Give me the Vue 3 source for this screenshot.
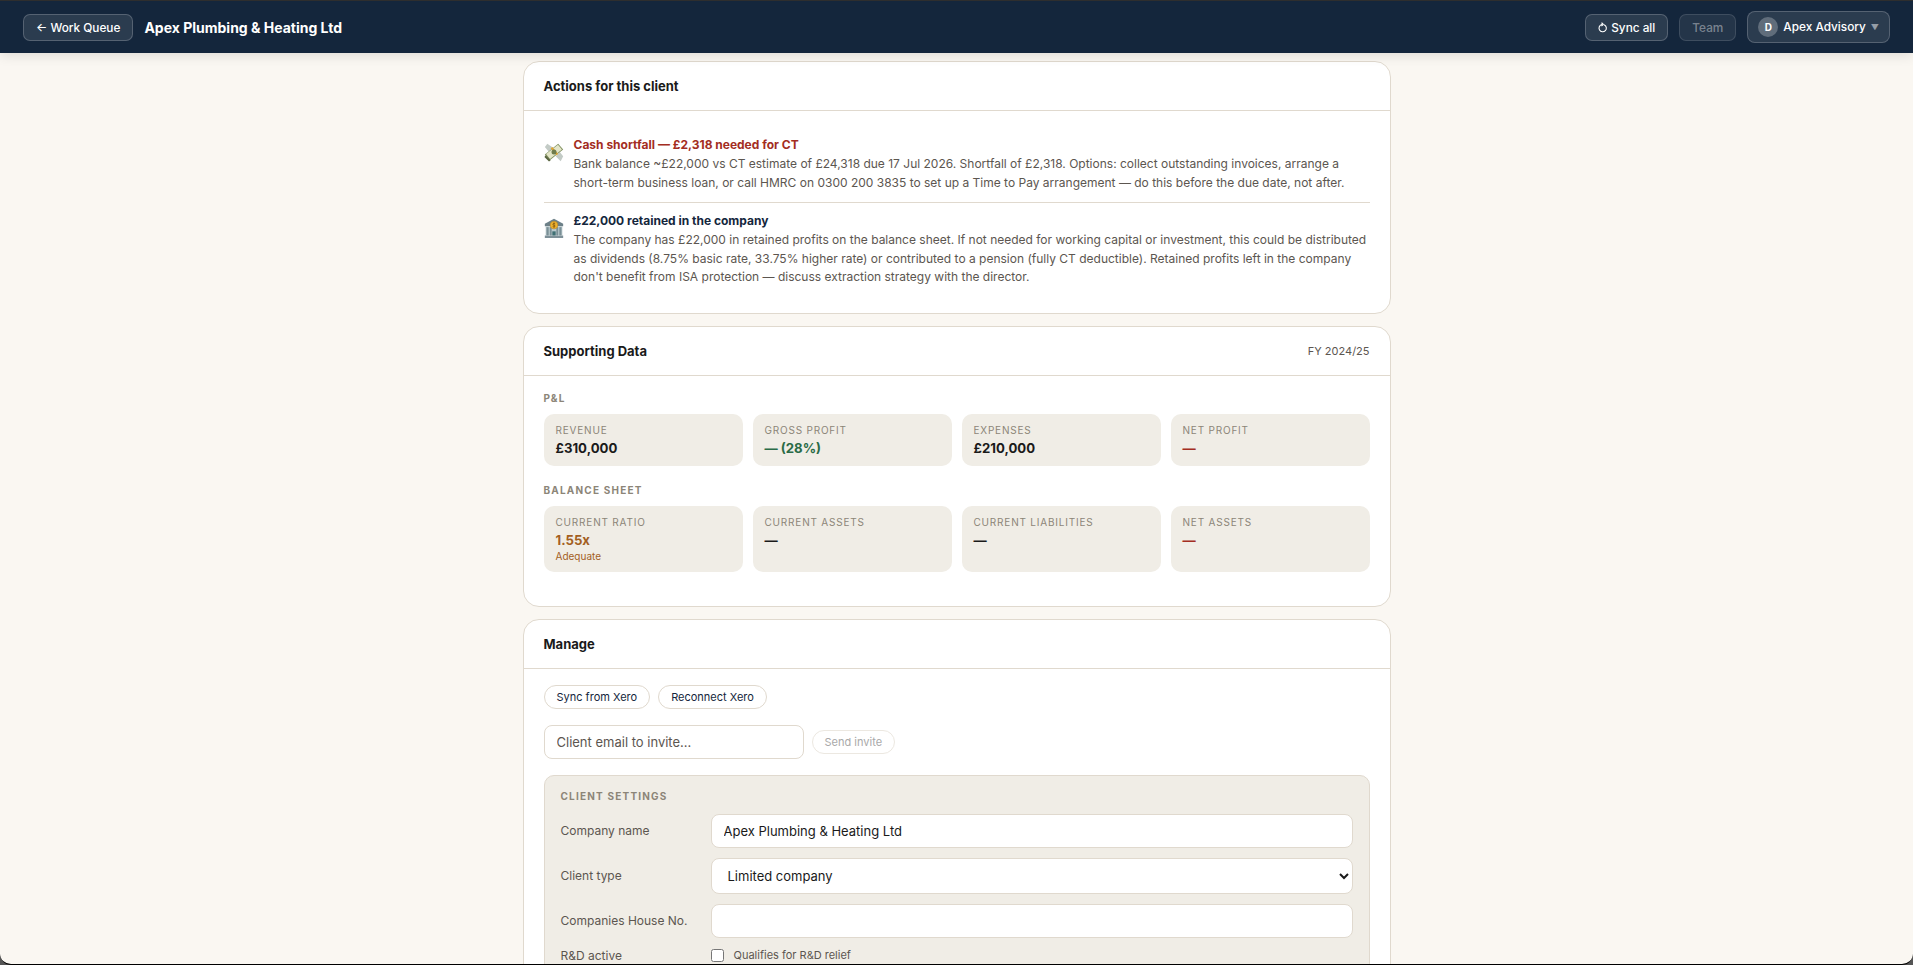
<script setup>
const pnl = [
  { label: 'Revenue', value: '£310,000', tone: '' },
  { label: 'Gross Profit', value: '— (28%)', tone: 'green' },
  { label: 'Expenses', value: '£210,000', tone: '' },
  { label: 'Net Profit', value: '—', tone: 'red' },
]
const balance = [
  { label: 'Current Ratio', value: '1.55x', tone: 'amber', sub: 'Adequate' },
  { label: 'Current Assets', value: '—', tone: '' },
  { label: 'Current Liabilities', value: '—', tone: '' },
  { label: 'Net Assets', value: '—', tone: 'red' },
]
</script>

<template>
  <div class="frame">
    <header class="topbar">
      <div class="bar-group">
        <button class="bar-btn">← Work Queue</button>
        <span class="bar-title">Apex Plumbing &amp; Heating Ltd</span>
      </div>
      <div class="bar-group">
        <button class="bar-btn sync">
          <svg viewBox="0 0 12 12" width="10" height="11" fill="none" stroke="currentColor" stroke-width="1.3" stroke-linecap="round" stroke-linejoin="round">
            <path d="M7.8 2.9A4.4 4.4 0 1 1 4.4 2.5" />
            <path d="M4.6 .6 6.4 2.4 4.4 3.9" />
          </svg>
          Sync all
        </button>
        <button class="bar-btn dim">Team</button>
        <button class="bar-btn org">
          <span class="avatar">D</span>
          <span>Apex Advisory</span>
          <span class="caret">▼</span>
        </button>
      </div>
    </header>

    <main class="page">
      <section class="card">
        <div class="card-head"><h2>Actions for this client</h2></div>
        <div class="card-body actions">
          <div class="action">
            <svg class="emoji" viewBox="0 0 24 24" width="20" height="20">
              <path d="M1 6 4 2 11 7 6 12Z" fill="#c3cbc6" />
              <path d="M14 17 19 12 23 17 20 23Z" fill="#c3cbc6" />
              <path d="M1 15 17 2 23 9 7 22Z" fill="#7f8f5e" />
              <path d="M2.5 14.5 16.8 3.4 21.5 9 7.2 20.5Z" fill="#e4e6c8" />
              <path d="M8 7.5 10 6 17 14.5 15 16Z" fill="#e0a32f" />
              <circle cx="12" cy="12" r="3" fill="#6f7c4c" />
              <path d="M2 16 8 22 6 23.5 .5 18Z" fill="#59653f" />
            </svg>
            <div>
              <div class="action-title red">Cash shortfall — £2,318 needed for CT</div>
              <p>Bank balance ~£22,000 vs CT estimate of £24,318 due 17 Jul 2026. Shortfall of £2,318. Options: collect outstanding invoices, arrange a short-term business loan, or call HMRC on 0300 200 3835 to set up a Time to Pay arrangement — do this before the due date, not after.</p>
            </div>
          </div>
          <div class="action">
            <svg class="emoji" viewBox="0 0 24 24" width="20" height="20">
              <path d="M12 1 23 7V10H1V7Z" fill="#6d8088" />
              <rect x="1" y="21" width="22" height="3" fill="#7e9098" />
              <rect x="2" y="10" width="20" height="11" fill="#b9c8cc" />
              <rect x="3" y="11" width="2.6" height="10" fill="#7a8f96" />
              <rect x="7" y="11" width="2.2" height="10" fill="#7a8f96" />
              <rect x="14.8" y="11" width="2.2" height="10" fill="#7a8f96" />
              <rect x="18.4" y="11" width="2.6" height="10" fill="#7a8f96" />
              <rect x="10" y="16" width="4" height="5" fill="#3f6f73" />
              <circle cx="12" cy="8.5" r="4.6" fill="#eeb32f" stroke="#b47a14" stroke-width=".6" />
              <path d="M13.5 7c-.9-.8-3-.7-3 .6s3 .9 3 2-2.1 1.4-3.1.5M12 5.2v6.6" fill="none" stroke="#7a4c08" stroke-width=".8" />
            </svg>
            <div>
              <div class="action-title navy">£22,000 retained in the company</div>
              <p>The company has £22,000 in retained profits on the balance sheet. If not needed for working capital or investment, this could be distributed as dividends (8.75% basic rate, 33.75% higher rate) or contributed to a pension (fully CT deductible). Retained profits left in the company don't benefit from ISA protection — discuss extraction strategy with the director.</p>
            </div>
          </div>
        </div>
      </section>

      <section class="card">
        <div class="card-head">
          <h2>Supporting Data</h2>
          <span class="fy">FY 2024/25</span>
        </div>
        <div class="card-body data">
          <div class="group-label">P&amp;L</div>
          <div class="tiles">
            <div v-for="t in pnl" :key="t.label" class="tile">
              <div class="tile-label">{{ t.label }}</div>
              <div class="tile-value" :class="t.tone">{{ t.value }}</div>
            </div>
          </div>
          <div class="group-label second">Balance Sheet</div>
          <div class="tiles">
            <div v-for="t in balance" :key="t.label" class="tile">
              <div class="tile-label">{{ t.label }}</div>
              <div class="tile-value" :class="t.tone">{{ t.value }}</div>
              <div v-if="t.sub" class="tile-sub">{{ t.sub }}</div>
            </div>
          </div>
        </div>
      </section>

      <section class="card">
        <div class="card-head"><h2>Manage</h2></div>
        <div class="card-body manage">
          <div class="pill-row">
            <button class="pill">Sync from Xero</button>
            <button class="pill">Reconnect Xero</button>
          </div>
          <div class="invite-row">
            <input class="invite-input" type="text" placeholder="Client email to invite..." />
            <button class="pill disabled" disabled>Send invite</button>
          </div>
          <div class="settings">
            <div class="settings-title">Client Settings</div>
            <div class="field">
              <label>Company name</label>
              <input class="control" type="text" value="Apex Plumbing &amp; Heating Ltd" />
            </div>
            <div class="field">
              <label>Client type</label>
              <select class="control select">
                <option>Limited company</option>
              </select>
            </div>
            <div class="field">
              <label>Companies House No.</label>
              <input class="control" type="text" />
            </div>
            <div class="field check-field">
              <label>R&amp;D active</label>
              <span class="check-wrap">
                <input type="checkbox" class="check" />
                <span>Qualifies for R&amp;D relief</span>
              </span>
            </div>
          </div>
        </div>
      </section>
    </main>
  </div>
</template>

<style>
html, body { margin: 0; background: #555; overflow: hidden; }
</style>

<style scoped>
.frame {
  height: 965px;
  box-sizing: border-box;
  border-top: 1px solid #2e2e2e;
  border-bottom: 1px solid #000;
  border-radius: 0 0 11px 11px;
  background: #faf7f2;
  overflow: hidden;
  font-family: Inter, "Noto Sans", sans-serif;
  color: #1a1a1a;
  display: flex;
  flex-direction: column;
}
.topbar {
  flex: none;
  height: 52px;
  padding: 0 23px;
  background: #14263c;
  display: flex;
  align-items: center;
  justify-content: space-between;
  box-shadow: 0 2px 12px rgba(0, 0, 0, 0.12);
  position: relative;
  z-index: 1;
}
.bar-group { display: flex; align-items: center; gap: 11px; }
.bar-btn {
  height: 27px;
  padding: 1px 12px 0;
  box-sizing: border-box;
  display: inline-flex;
  align-items: center;
  gap: 4px;
  background: rgba(255, 255, 255, 0.1);
  border: 1px solid rgba(255, 255, 255, 0.2);
  border-radius: 7px;
  color: #fff;
  font: 500 11.8px Inter, sans-serif;
}
.bar-btn.sync { gap: 3px; }
.bar-btn.dim { color: rgba(255, 255, 255, 0.4); background: rgba(255, 255, 255, 0.07); border-color: rgba(255, 255, 255, 0.12); }
.bar-btn.org { height: 32px; padding: 0 10px; gap: 5px; border-radius: 8px; }
.avatar {
  width: 20px;
  height: 20px;
  border-radius: 50%;
  background: rgba(255, 255, 255, 0.25);
  display: inline-flex;
  align-items: center;
  justify-content: center;
  font-size: 10px;
  font-weight: 700;
}
.caret { color: rgba(255, 255, 255, 0.5); font-size: 8px; }
.bar-title { color: #fff; font-size: 14px; font-weight: 700; }
.page {
  width: 868px;
  margin: 0 auto;
  padding-top: 8px;
  display: flex;
  flex-direction: column;
  gap: 12px;
}
.card {
  background: #fff;
  border: 1px solid #e0d9ce;
  border-radius: 16px;
  flex: none;
}
.card-head {
  height: 48px;
  padding: 0 20px;
  border-bottom: 1px solid #e0d9ce;
  display: flex;
  align-items: center;
  justify-content: space-between;
}
.card-head h2 { margin: 0; font-size: 13px; font-weight: 700; color: #1a1a1a; }
.fy { font-size: 11px; color: #5c5650; }
.card-body { padding: 0 20px; }
.actions { padding: 14px 20px 16px; }
.action { display: flex; gap: 10px; padding: 10.5px 0 10px; }
.action + .action { border-top: 1px solid #e0d9ce; padding-top: 8.5px; }
.emoji { flex: none; margin-top: 6px; }
.action-title { font-size: 12px; font-weight: 700; line-height: 18px; margin-bottom: 1.5px; }
.action-title.red { color: #a32d22; }
.action-title.navy { color: #14263c; }
.action p { margin: 0; font-size: 12px; line-height: 18.6px; color: #5c5650; }
.data { padding: 16px 20px 34px; }
.group-label {
  font-size: 10px;
  font-weight: 700;
  letter-spacing: 0.12em;
  text-transform: uppercase;
  color: #8c8578;
  line-height: 13px;
  margin-bottom: 9px;
}
.group-label.second { margin-top: 18px; }
.tiles { display: grid; grid-template-columns: repeat(4, 1fr); gap: 10px; }
.tile { background: #f0ede6; border-radius: 10px; padding: 9px 12px; }
.tile-label { font-size: 10px; letter-spacing: 0.08em; text-transform: uppercase; color: #8c8578; line-height: 15px; }
.tile-value { font-size: 13.2px; font-weight: 700; line-height: 17px; margin-top: 2px; color: #1a1a1a; }
.tile-value.green { color: #2a6b47; }
.tile-value.red { color: #a32d22; }
.tile-value.amber { color: #a35f1f; }
.tile-sub { font-size: 10px; color: #a35f1f; line-height: 14px; }
.manage { padding: 16px 20px; }
.pill-row { display: flex; gap: 8px; margin-bottom: 16px; }
.pill {
  height: 24px;
  padding: 0 12px;
  background: #fff;
  border: 1px solid #e0d9ce;
  border-radius: 12px;
  font: 400 11px Inter, sans-serif;
  color: #14263c;
}
.pill.disabled { color: #a9a9a9; border-color: #ece8e1; }
.invite-row { display: flex; align-items: center; gap: 8px; margin-bottom: 16px; }
.invite-input {
  width: 260px;
  height: 34px;
  box-sizing: border-box;
  padding: 0 12px;
  border: 1px solid #e0d9ce;
  border-radius: 8px;
  font: 13px Inter, sans-serif;
  background: #fff;
}
.invite-input::placeholder { color: #5c5650; opacity: 1; }
.settings { background: #f0ede6; border: 1px solid #e0d9ce; border-radius: 10px; padding: 14px 16px; }
.settings-title { font-size: 10px; font-weight: 700; letter-spacing: 0.12em; text-transform: uppercase; color: #8c8578; line-height: 13px; margin-bottom: 11px; }
.field { display: grid; grid-template-columns: 150px 1fr; align-items: center; margin-bottom: 10px; }
.field label { font-size: 12px; color: #5c5650; }
.control {
  width: 100%;
  height: 34px;
  box-sizing: border-box;
  padding: 0 12px;
  border: 1px solid #e0d9ce;
  border-radius: 8px;
  background: #fff;
  font: 13px Inter, sans-serif;
  color: #1a1a1a;
}
.select { height: 36px; }
.check-wrap { display: flex; align-items: center; gap: 10px; font-size: 11px; color: #5c5650; }
.check { width: 13px; height: 13px; margin: 0; }
</style>
